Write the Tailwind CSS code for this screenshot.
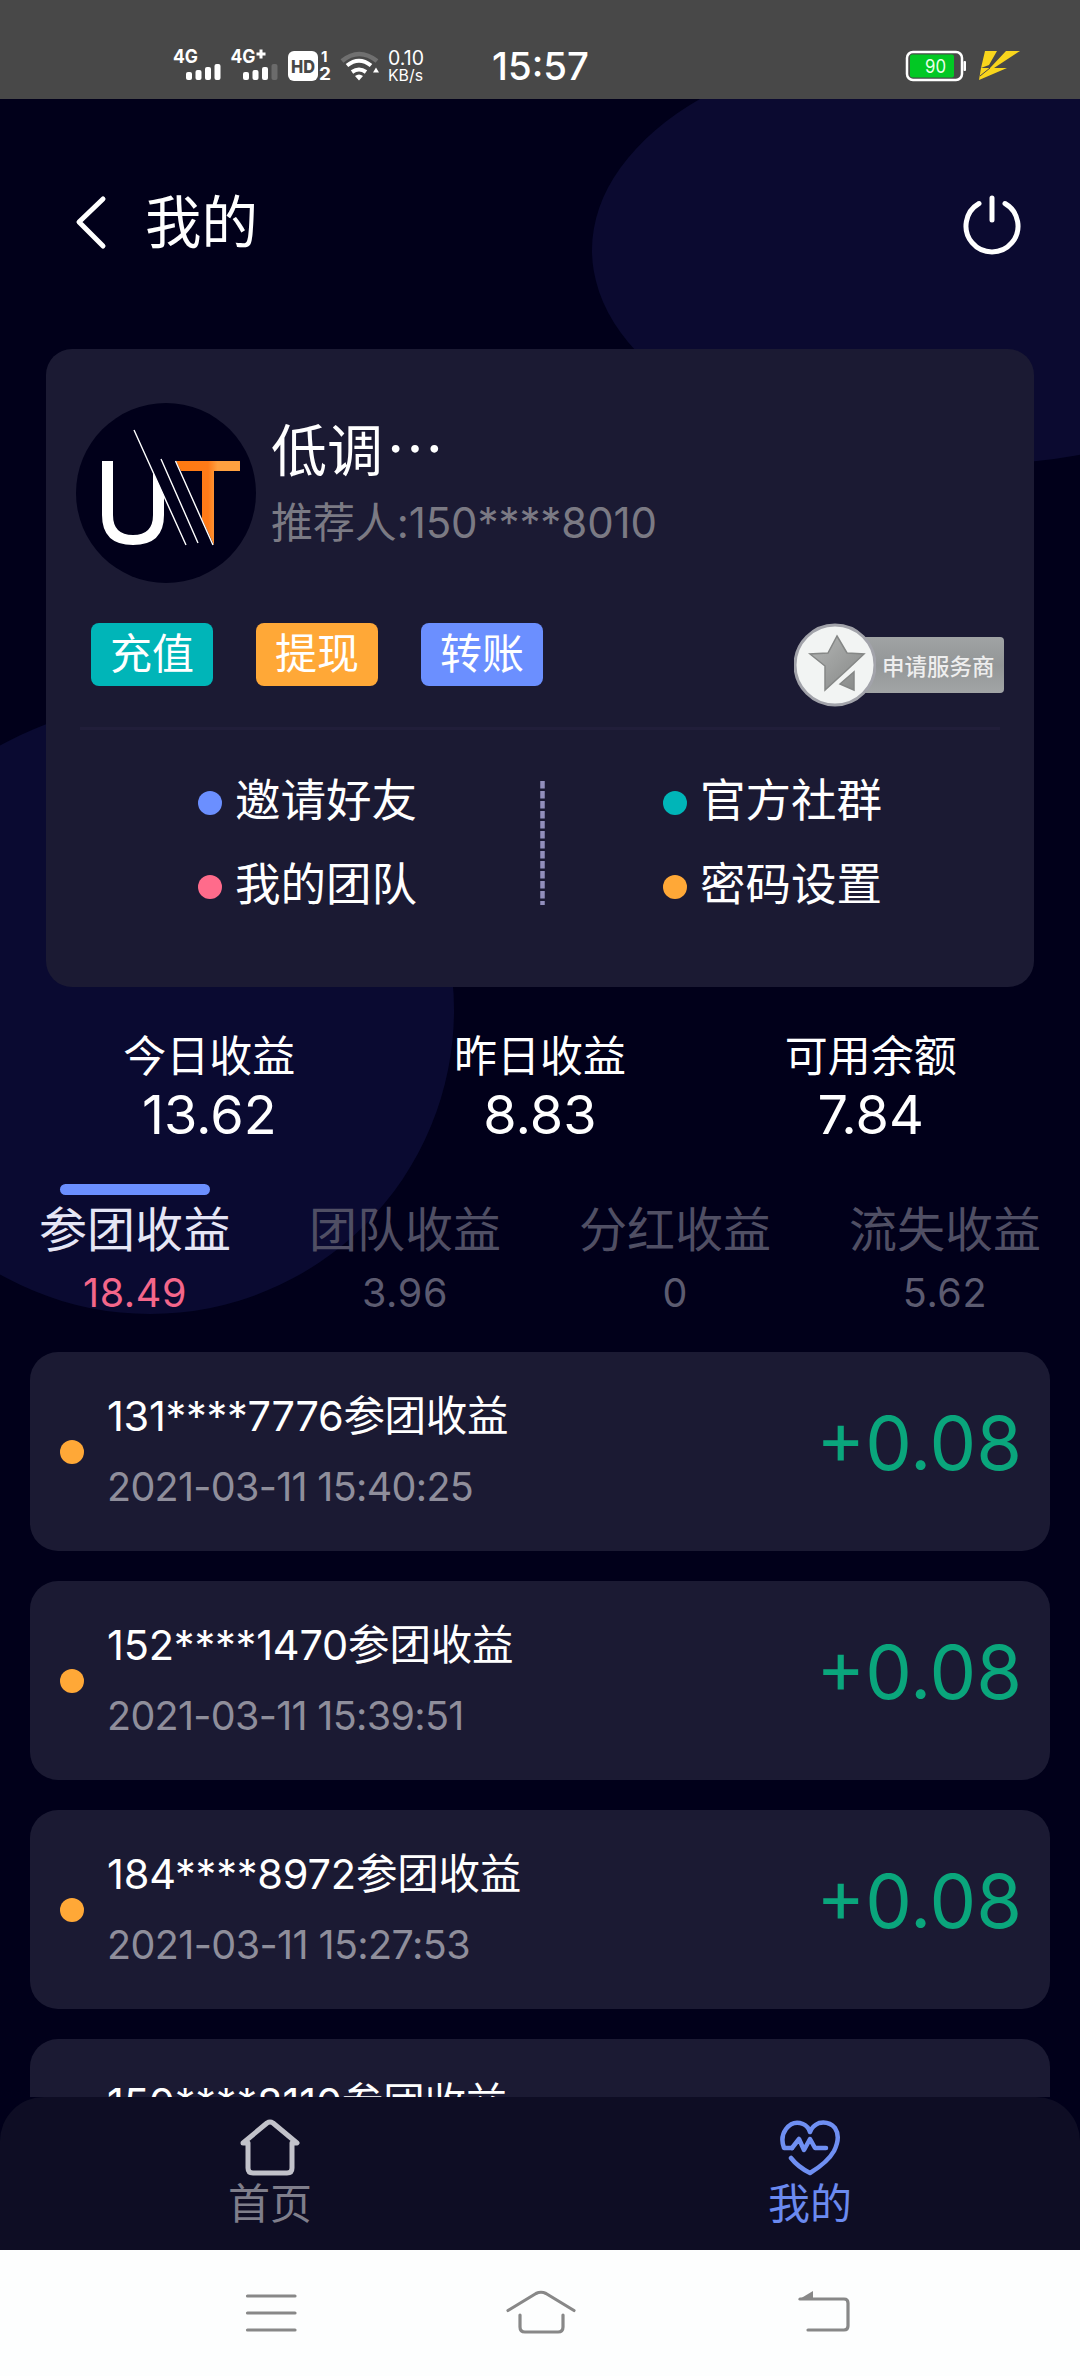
<!DOCTYPE html>
<html lang="zh-CN">
<head>
<meta charset="utf-8">
<title>我的</title>
<script src="https://cdn.jsdelivr.net/npm/@tailwindcss/browser@4"></script>
</head>
<body class="w-[1080px] h-[2376px] overflow-hidden bg-[#01001a] text-white font-['Inter','Noto_Sans_CJK_SC',sans-serif]">
<div class="relative flex h-[2376px] w-[1080px] flex-col overflow-hidden">
  <!-- decorative background shapes -->
  <svg class="absolute left-0 top-0" width="1080" height="2376" viewBox="0 0 1080 2376">
    <ellipse cx="966" cy="250" rx="374" ry="215" fill="#0b0a30"/>
    <circle cx="150" cy="1010" r="304" fill="#0a0a31"/>
  </svg>

  <!-- status bar -->
  <header class="relative h-[99px] shrink-0 bg-[#484848]">
    <svg width="1080" height="99" viewBox="0 0 1080 99" fill="#fff" font-family="Inter, sans-serif">
      <text x="173" y="63" font-size="18.500" font-weight="700" textLength="25" lengthAdjust="spacingAndGlyphs">4G</text>
      <rect x="186" y="72" width="6" height="8" rx="2"/><rect x="195.500" y="70" width="6" height="10" rx="2"/><rect x="205" y="67" width="6" height="13" rx="2"/><rect x="214.500" y="64" width="6" height="16" rx="2"/>
      <text x="230.500" y="63" font-size="18.500" font-weight="700" textLength="25" lengthAdjust="spacingAndGlyphs">4G</text>
      <path d="M261 49.500V58.500M256.500 54H265.500" stroke="#fff" stroke-width="3"/>
      <rect x="243" y="72" width="6" height="8" rx="2"/><rect x="252.500" y="70" width="6" height="10" rx="2"/><rect x="262" y="67" width="6" height="13" rx="2"/><rect x="271.500" y="64" width="6" height="16" rx="2" fill="#6b6b6b"/>
      <rect x="288" y="51" width="30" height="30" rx="6"/>
      <text x="291" y="73" font-size="18" font-weight="800" fill="#484848" textLength="24" lengthAdjust="spacingAndGlyphs">HD</text>
      <text x="321" y="62" font-size="15" font-weight="700">1</text>
      <text x="319" y="80" font-size="17" font-weight="700" textLength="12" lengthAdjust="spacingAndGlyphs">2</text>
      <g fill="none" stroke="#fff" stroke-width="4">
        <path d="M342 61Q359 47 377 61" stroke="#707070" stroke-width="4.500"/>
        <path d="M347 65.500Q359 56 371 65.500"/>
        <path d="M352 72Q359 67 366 72"/>
      </g>
      <path d="M355 76Q359 73 363 76L359 80.500ZM373 72.500L376 67.500L379 72.500Z"/>
      <text x="388" y="65" font-size="19.500" textLength="36" lengthAdjust="spacingAndGlyphs">0.10</text>
      <text x="388" y="80.500" font-size="16" textLength="35" lengthAdjust="spacingAndGlyphs">KB/s</text>
      <text x="492" y="80" font-size="37.500" font-weight="500" textLength="97" lengthAdjust="spacingAndGlyphs">15:57</text>
      <rect x="907" y="52" width="55" height="28" rx="6" fill="none" stroke="#fff" stroke-width="2.500"/>
      <rect x="963.500" y="61" width="2.500" height="10" rx="1"/>
      <rect x="910" y="54.500" width="44" height="23" rx="2" fill="#02c824"/>
      <text x="925" y="73" font-size="19" textLength="21" lengthAdjust="spacingAndGlyphs" fill="#eaffea">90</text>
      <path fill="#f8d51c" d="M985 51H997L989 65L981 68ZM1006 51H1020L994 68H990ZM981 68H1007L979 80Z"/>
      <path stroke="#484848" stroke-width="1" d="M990 68L980 76"/>
    </svg>
  </header>

  <!-- title bar -->
  <div class="relative flex h-[249px] shrink-0 items-center justify-between pl-[73px] pr-[58px]">
    <div class="flex items-center pb-[2px]">
      <svg width="36" height="56" viewBox="0 0 36 56" fill="none" stroke="#fff" stroke-width="5" stroke-linecap="round" stroke-linejoin="round"><path d="M30 4L6 27L30 51"/></svg>
      <h1 class="ml-[36px] text-[56.500px] leading-[60px]">我的</h1>
    </div>
    <svg width="60" height="62" viewBox="0 0 60 62" fill="none" stroke="#fff" stroke-width="5" stroke-linecap="round"><path d="M17 10.500A26 26 0 1 0 43 10.500M30 5V27"/></svg>
  </div>

  <!-- profile card -->
  <section class="relative mx-[46px] mt-px flex h-[638px] shrink-0 flex-col rounded-[26px] bg-[#1b1a33]">
    <div class="flex h-[233px] pl-[30px] pt-[54px]">
      <svg width="180" height="180" viewBox="76 403 180 180">
        <defs><linearGradient id="t" x1="0" x2="1"><stop offset="0" stop-color="#ff7a10"/><stop offset=".5" stop-color="#ff7a18"/><stop offset=".65" stop-color="#ffa040"/><stop offset="1" stop-color="#ffa040"/></linearGradient></defs>
        <circle cx="166" cy="493" r="90" fill="#01001a"/>
        <path fill="#fff" d="M102 461H113V515Q113 535 133 535Q153 535 153 515V472L164 496V515Q164 545 133 545Q102 545 102 515Z"/>
        <path fill="url(#t)" d="M176 461H240V471H214V545L202 519V471H181Z"/>
        <path stroke="#fff" stroke-width="1.400" d="M134 430L186 545M161 459L198 543M175.500 461L213 545"/>
      </svg>
      <div class="ml-[15px] flex flex-col pt-[16px]">
        <div class="text-[56px] leading-[64px]">低调<span class="ml-[3px] font-['Noto_Sans_CJK_SC'] text-[58px] leading-[1px]">…</span></div>
        <div class="mt-[9px] text-[42px] leading-[62px] text-[#7b7a84] tracking-[-0.1px]">推荐人:150****8010</div>
      </div>
    </div>
    <div class="flex h-[145px] items-start pl-[45px] pr-[30px] pt-[41px]">
      <div class="flex gap-[43px] text-[42px] leading-[62px]">
        <div class="h-[63px] w-[122px] rounded-lg bg-[#00b5b8] text-center">充值</div>
        <div class="h-[63px] w-[122px] rounded-lg bg-[#ffa837] text-center">提现</div>
        <div class="h-[63px] w-[122px] rounded-lg bg-[#6b8fff] text-center">转账</div>
      </div>
      <div class="ml-auto flex items-center">
        <svg class="z-10 -mr-[41px]" width="82" height="84" viewBox="0 0 82 84">
          <defs><linearGradient id="s" x2="1" y2="1"><stop stop-color="#b4b6b5"/><stop offset="1" stop-color="#858786"/></linearGradient></defs>
          <circle cx="41" cy="42" r="40" fill="#f2f4f3" stroke="#a2a3aa" stroke-width="3"/>
          <path fill="url(#s)" stroke="#858786" stroke-width="1.500" d="M43 13L53 30L70 31L54 46L31 67V43L16 31L34 30ZM60 49V67L46 61Z"/>
        </svg>
        <div class="h-[56px] w-[169px] rounded-[4px] bg-linear-to-b from-[#a0a3a4] via-[#939697] to-[#a2a5a6] pl-[47px] pt-[3px] text-[22.500px] leading-[53px] font-medium text-[#eeeeee]">申请服务商</div>
      </div>
    </div>
    <div class="mx-[34px] h-[3px] bg-[#211e3a]"></div>
    <div class="relative grid grid-cols-[465px_1fr] gap-y-[24px] pl-[152px] pt-[41px] text-[45.500px] leading-[60px]">
      <div class="flex items-center"><i class="mt-1 mr-[13px] size-6 rounded-full bg-[#6b8fff]"></i>邀请好友</div>
      <div class="flex items-center"><i class="mt-1 mr-[13px] size-6 rounded-full bg-[#00b5b8]"></i>官方社群</div>
      <div class="flex items-center"><i class="mt-1 mr-[13px] size-6 rounded-full bg-[#ff6b8b]"></i>我的团队</div>
      <div class="flex items-center"><i class="mt-1 mr-[13px] size-6 rounded-full bg-[#ffa837]"></i>密码设置</div>
      <svg class="absolute left-[494px] top-[50px]" width="5" height="126" viewBox="0 0 5 126"><path d="M2.500 1V125" stroke="#928fbd" stroke-width="4.500" stroke-dasharray="7.500 2.500"/></svg>
    </div>
  </section>

  <!-- totals -->
  <section class="relative mx-[44px] grid h-[197px] shrink-0 grid-cols-3 content-start pt-[39px] text-center">
    <div><div class="text-[43px] leading-[60px]">今日收益</div><div class="mt-px text-[54px] leading-[56px]">13.62</div></div>
    <div><div class="text-[43px] leading-[60px]">昨日收益</div><div class="mt-px text-[54px] leading-[56px]">8.83</div></div>
    <div><div class="text-[43px] leading-[60px]">可用余额</div><div class="mt-px text-[54px] leading-[56px]">7.84</div></div>
  </section>

  <!-- income tabs -->
  <nav class="relative grid h-[168px] shrink-0 grid-cols-4 text-center text-[#504f64]">
    <div class="flex flex-col items-center"><i class="h-[11px] w-[150px] rounded-full bg-[#6b8fff]"></i><div class="mt-[5px] text-[48px] leading-[60px] text-[#e6e6f5]">参团收益</div><div class="mt-[9px] text-[39.500px] leading-[48px] tracking-[0.6px] text-[#f4668a]">18.49</div></div>
    <div class="flex flex-col items-center"><div class="mt-[16px] text-[48px] leading-[60px]">团队收益</div><div class="mt-[9px] text-[39.500px] leading-[48px] tracking-[0.6px] text-[#5c5b70]">3.96</div></div>
    <div class="flex flex-col items-center"><div class="mt-[16px] text-[48px] leading-[60px]">分红收益</div><div class="mt-[9px] text-[39.500px] leading-[48px] text-[#5c5b70]">0</div></div>
    <div class="flex flex-col items-center"><div class="mt-[16px] text-[48px] leading-[60px]">流失收益</div><div class="mt-[9px] text-[39.500px] leading-[48px] tracking-[0.6px] text-[#5c5b70]">5.62</div></div>
  </nav>

  <!-- income records -->
  <main class="relative mx-[30px] flex h-[745px] shrink-0 flex-col gap-[30px] overflow-hidden">
    <article class="flex h-[199px] shrink-0 items-center rounded-[28px] bg-[#1b1a33] pl-[30px] pr-[28px]">
      <i class="mr-[23px] size-6 rounded-full bg-[#ffa837]"></i>
      <div><div class="text-[41.500px] leading-[60px] tracking-[-0.3px]">131****7776参团收益</div><div class="mt-[11px] text-[39.500px] leading-[60px] tracking-[-0.7px] text-[#8f8e9b]">2021-03-11 15:40:25</div></div>
      <div class="ml-auto -mt-[18px] text-[74px] leading-[80px] font-[370] text-[#0aa67c]">+0.08</div>
    </article>
    <article class="flex h-[199px] shrink-0 items-center rounded-[28px] bg-[#1b1a33] pl-[30px] pr-[28px]">
      <i class="mr-[23px] size-6 rounded-full bg-[#ffa837]"></i>
      <div><div class="text-[41.500px] leading-[60px] tracking-[-0.2px]">152****1470参团收益</div><div class="mt-[11px] text-[39.500px] leading-[60px] tracking-[-0.7px] text-[#8f8e9b]">2021-03-11 15:39:51</div></div>
      <div class="ml-auto -mt-[18px] text-[74px] leading-[80px] font-[370] text-[#0aa67c]">+0.08</div>
    </article>
    <article class="flex h-[199px] shrink-0 items-center rounded-[28px] bg-[#1b1a33] pl-[30px] pr-[28px]">
      <i class="mr-[23px] size-6 rounded-full bg-[#ffa837]"></i>
      <div><div class="text-[41.500px] leading-[60px] tracking-[-0.2px]">184****8972参团收益</div><div class="mt-[11px] text-[39.500px] leading-[60px] tracking-[-0.6px] text-[#8f8e9b]">2021-03-11 15:27:53</div></div>
      <div class="ml-auto -mt-[18px] text-[74px] leading-[80px] font-[370] text-[#0aa67c]">+0.08</div>
    </article>
    <article class="h-[199px] shrink-0 rounded-[28px] bg-[#1b1a33] pl-[77px] pt-[34px]">
      <div class="text-[41.500px] leading-[60px] tracking-[-0.2px]">150****8110参团收益</div>
    </article>
  </main>

  <!-- tab bar -->
  <footer class="relative grid h-[153px] shrink-0 grid-cols-2 rounded-t-[44px] bg-[#0e0d24] pt-[20px] text-center text-[42px]">
    <div class="flex flex-col items-center text-[#7f7e8b]">
      <svg width="64" height="62" viewBox="0 0 64 62" fill="none" stroke="#c2c2ca" stroke-width="5" stroke-linecap="round" stroke-linejoin="round"><path d="M10 26H5L29 6Q32 4 35 6L59 26H54V51Q54 56 49 56H15Q10 56 10 51Z"/></svg>
      <div class="-mt-[5px] leading-[60px]">首页</div>
    </div>
    <div class="flex flex-col items-center text-[#6b8af0]">
      <svg width="64" height="62" viewBox="0 0 64 62" fill="none" stroke="#6f8ff2" stroke-width="4.500" stroke-linecap="round" stroke-linejoin="round"><path d="M14 31H6Q2 20 8 12Q15 3 25 7Q30 9 32 15Q34 9 41 6Q51 4 57 11Q63 20 56 34Q50 45 32 56Q20 50 13 41"/><path d="M14 31L21 22L26 33L32 22L37 31H48"/></svg>
      <div class="-mt-[5px] leading-[60px]">我的</div>
    </div>
  </footer>

  <!-- system navigation -->
  <div class="relative h-[126px] shrink-0 bg-[#fdfefe]">
    <svg width="1080" height="126" viewBox="0 2250 1080 126" fill="none" stroke="#888" stroke-width="3.200" stroke-linecap="round" stroke-linejoin="round"><path d="M247.500 2296H295M247.500 2313H295M247.500 2330H295"/><path d="M508 2310.500L536 2293.500Q541 2291 546 2293.500L574 2310.500M520 2315V2327Q520 2332 525 2332H558Q563 2332 563 2327V2315"/><path d="M808 2330H844Q848 2330 848 2326V2303Q848 2299 844 2299H800"/><path d="M798 2300L813 2291V2300Z" fill="#888" stroke="none"/></svg>
  </div>
</div>
</body>
</html>
